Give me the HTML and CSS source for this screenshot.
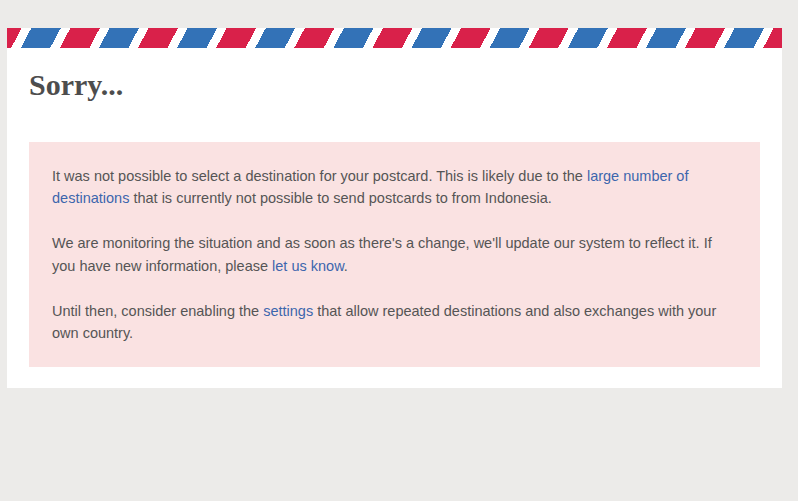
FILE: index.html
```html
<!DOCTYPE html>
<html lang="en">

<head>
    <meta charset="UTF-8">
    <meta name="viewport" content="width=device-width, initial-scale=1.0">
    <link rel="stylesheet" href="styles.css">
    <title>Sorry...</title>
</head>

<body>

    <div class="card">
        <div class="airmail"></div>

        <div class="content">
            <h1>Sorry...</h1>

            <div class="notice">
                <p>It was not possible to select a destination for your postcard. This is likely due to the
                    <a href="#">large number of destinations</a> that is currently not possible to send postcards to
                    from Indonesia.</p>

                <p>We are monitoring the situation and as soon as there's a change, we'll update our system to
                    reflect it. If you have new information, please <a href="#">let us know</a>.</p>

                <p>Until then, consider enabling the <a href="#">settings</a> that allow repeated destinations and
                    also exchanges with your own country.</p>
            </div>
        </div>
    </div>

</body>

</html>
```

FILE: styles.css
```css
body {
    margin: 0;
    background-color: #ecebe9;
    font-family: 'Liberation Sans', Arial, sans-serif;
    color: #555;
}

.card {
    width: 775px;
    margin: 28px 0 0 7px;
    padding-bottom: 21px;
    background-color: #fff;
}

.airmail {
    height: 20px;
    background: repeating-linear-gradient(118deg,
            #d9214a 0 13px,
            #fff 13px 21.5px,
            #3372b7 21.5px 47.5px,
            #fff 47.5px 56px,
            #d9214a 56px 69px);
}

.content {
    padding: 0 22px 0 22px;
}

h1 {
    margin: 20px 0 40px 0;
    font-family: 'Liberation Serif', 'Times New Roman', serif;
    font-size: 30px;
    line-height: 34px;
    font-weight: bold;
    color: #4d4d4d;
}

.notice {
    padding: 22.5px 23px;
    background-color: #fae2e2;
}

.notice p {
    margin: 0 0 22.5px 0;
    font-size: 14.5px;
    line-height: 22.5px;
}

.notice p:last-child {
    margin-bottom: 0;
}

a {
    color: #3d66ad;
    text-decoration: none;
}
```
